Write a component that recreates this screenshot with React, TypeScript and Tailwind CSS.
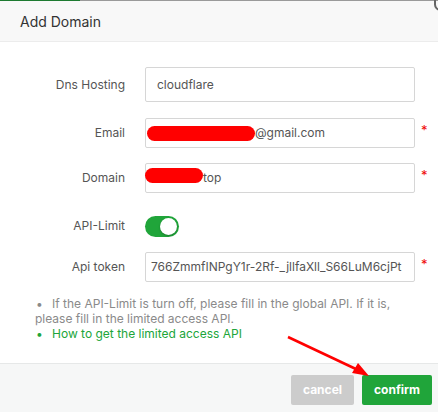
import type { ReactNode } from 'react';

// One labelled line of the form: label column on the left, field on the right
function Row({ label, required, children, className = '' }: { label: string; required?: boolean; children: ReactNode; className?: string }) {
  return (
    <div className={`flex items-center ${className}`}>
      <div className="w-[125px] shrink-0 text-right text-[12px] text-[#555]">{label}</div>
      <div className="ml-5 w-[270px] shrink-0">{children}</div>
      {required && <span className="ml-[6px] -mt-1 text-[13px] text-[#ef0808]">*</span>}
    </div>
  );
}

function Field({ children, className = '' }: { children: ReactNode; className?: string }) {
  return (
    <div className={`flex items-center h-[30px] border border-[#d6d6d6] rounded-[2px] bg-white text-[12px] text-[#555] whitespace-nowrap overflow-hidden ${className}`}>
      {children}
    </div>
  );
}

// Red marker over hidden parts of a value
function Redact({ w }: { w: number }) {
  return <span className="inline-block h-[15px] rounded-full bg-[#ff0000] shrink-0" style={{ width: w }} />;
}

export default function App() {
  return (
    <div className="relative w-[438px] h-[412px] bg-white overflow-hidden font-['Inter','Liberation_Sans',sans-serif]">
      {/* strip of the page underneath */}
      <div className="flex h-px">
        <div className="w-[80px] bg-[#1d7a31]" />
        <div className="flex-1 bg-[#9a9a9a]" />
      </div>
      <div className="absolute -top-[9px] -right-[9px] w-[13px] h-[20px] rounded-full border-[2px] border-[#666]" />

      <div className="h-[41px] flex items-center pl-5 bg-[#f8f8f8] border-b border-[#ececec] text-[14px] text-[#333]">
        Add Domain
      </div>

      <div className="h-[321px] pt-[25px]">
        <Row label="Dns Hosting">
          <Field className="h-[35px] pl-[11px]">cloudflare</Field>
        </Row>
        <Row label="Email" required className="mt-[16px]">
          <Field className="pl-px">
            <Redact w={108} />
            <span>@gmail.com</span>
          </Field>
        </Row>
        <Row label="Domain" required className="mt-[15px]">
          <Field className="h-[29px] pl-0 overflow-visible">
            <span className="-ml-px"><Redact w={58} /></span>
            <span>top</span>
          </Field>
        </Row>
        <Row label="API-Limit" className="mt-[18px] h-[30px]">
          <div className="relative w-[34px] h-[21px] rounded-full bg-[#20a53a]">
            <div className="absolute right-[2px] top-[2px] w-[17px] h-[17px] rounded-full bg-white shadow-[0_1px_2px_rgba(0,0,0,0.25)]" />
          </div>
        </Row>
        <Row label="Api token" required className="mt-[11px]">
          <Field className="pl-[5px]">766ZmmfINPgY1r-2Rf-_jllfaXll_S66LuM6cjPt</Field>
        </Row>

        <ul className="mt-[14px] ml-[35px] w-[362px] text-[12px] leading-[15px] text-[#8a8a8a]">
          <li>
            <span className="inline-block w-[17px] pl-[1px]">•</span>
            If the API-Limit is turn off, please fill in the global API. If it is, please fill in the limited access API.
          </li>
          <li className="text-[#20a53a]">
            <span className="inline-block w-[17px] pl-[1px]">•</span>
            How to get the limited access API
          </li>
        </ul>
      </div>

      <div className="flex justify-end gap-2 h-[50px] pt-[11px] pr-[6px] bg-[#f6f7f7] border-t border-[#e6e8e8]">
        <button className="w-[63px] h-[30px] rounded-[2px] bg-[#cccccc] text-white text-[12px] font-bold">cancel</button>
        <button className="w-[70px] h-[30px] rounded-[2px] bg-[#20a53a] text-white text-[12px] font-bold">confirm</button>
      </div>

      {/* hand-drawn pointer to the confirm button */}
      <svg className="absolute left-0 top-0 pointer-events-none" width="438" height="412">
        <line x1="288" y1="337" x2="358" y2="370" stroke="#ff0000" strokeWidth="2.5" />
        <polygon points="369,376 352,373 358,363" fill="#ff0000" />
      </svg>
    </div>
  );
}
